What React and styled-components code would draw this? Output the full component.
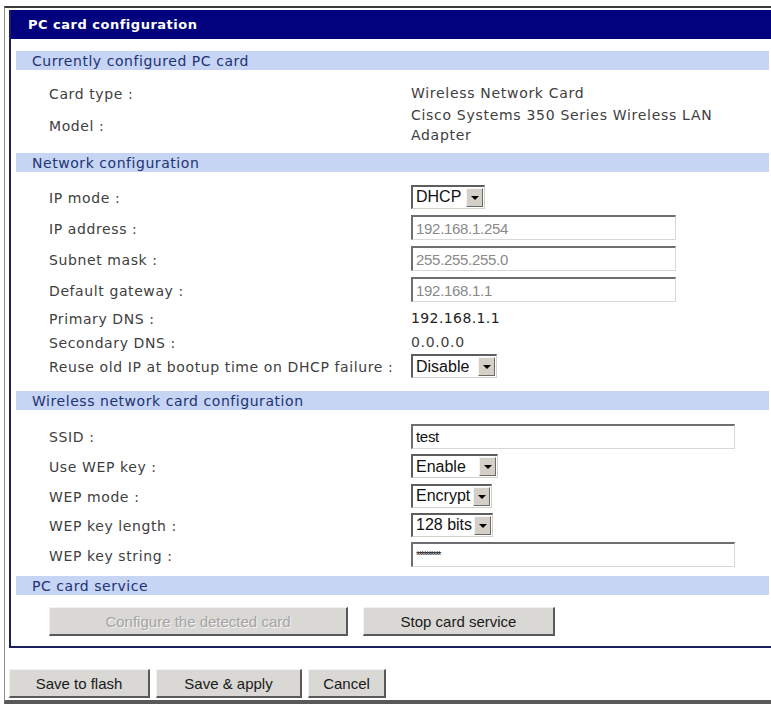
import React from 'react';
import styled, { createGlobalStyle } from 'styled-components';

const GlobalStyle = createGlobalStyle`
  html, body {
    margin: 0;
    padding: 0;
    background: #fff;
    overflow: hidden;
  }
  body {
    font-family: "DejaVu Sans", Verdana, sans-serif;
  }
`;

const Frame = styled.div`
  box-sizing: border-box;
  width: 775px;
  margin: 6px 0 0 4px;
  padding: 2px 4px 2px 4px;
  border-top: 2px solid #3a3a3a;
  border-left: 1px solid #8c8c8c;
  border-bottom: 4px solid #595959;
`;

const Panel = styled.div`
  border: 2px solid #1c1f5e;
  border-top: none;
  padding-bottom: 10px;
`;

const TitleBar = styled.div`
  height: 29px;
  display: flex;
  align-items: center;
  padding-left: 17px;
  background: #02027e;
  color: #fff;
  font-size: 13px;
  font-weight: bold;
  letter-spacing: 0.5px;
`;

const SectionBar = styled.div`
  height: 19px;
  margin: ${({ $top }) => $top}px 4px 0 5px;
  padding-left: 16px;
  display: flex;
  align-items: center;
  background: #c6d5f4;
  color: #223273;
  font-size: 14px;
  letter-spacing: 0.55px;
`;

const Rows = styled.div`
  padding-top: ${({ $top }) => $top}px;
`;

const Row = styled.div`
  display: grid;
  grid-template-columns: 362px 1fr;
  align-items: center;
  height: ${({ $h }) => $h}px;
  padding-left: 38px;
  color: #404040;
  font-size: 14px;
  letter-spacing: 0.6px;
`;

const Label = styled.div`
  padding-top: 2px;
  white-space: nowrap;
`;

const Value = styled.div`
  line-height: 20px;
  color: ${({ $strong }) => ($strong ? '#1e1e1e' : '#404040')};
  letter-spacing: ${({ $strong }) => ($strong ? '0.4px' : '0.7px')};
`;

const TextBox = styled.input`
  box-sizing: border-box;
  width: ${({ $w }) => $w}px;
  height: 25px;
  padding: 0 3px;
  margin: 0;
  background: #fff;
  border-style: solid;
  border-width: 2px 1px 1px 2px;
  border-color: #6e6e6e #d8d8d8 #d8d8d8 #6e6e6e;
  font-family: "Liberation Sans", Arial, sans-serif;
  font-size: ${({ $small }) => ($small ? '10px' : '15px')};
  letter-spacing: ${({ $small }) => ($small ? '-1.5px' : '-0.3px')};
  color: ${({ disabled }) => (disabled ? '#8a8a8a' : '#111')};
  outline: none;
`;

const SelectBox = styled.div`
  box-sizing: border-box;
  width: ${({ $w }) => $w}px;
  height: 24px;
  display: flex;
  align-items: center;
  border-style: solid;
  border-width: 2px 1px 1px 2px;
  border-color: #5e5e5e #d4d0c8 #d4d0c8 #5e5e5e;
  background: #fff;
  font-family: "Liberation Sans", Arial, sans-serif;
  font-size: 16px;
  letter-spacing: 0;
  color: #111;
`;

const SelectText = styled.span`
  flex: 1;
  padding-left: 3px;
  white-space: nowrap;
`;

const SelectButton = styled.span`
  box-sizing: border-box;
  width: 17px;
  height: 19px;
  margin-right: 1px;
  display: flex;
  align-items: center;
  justify-content: center;
  background: #d4d0c8;
  border-style: solid;
  border-width: 1px;
  border-color: #f4f4f4 #6a6a6a #6a6a6a #f4f4f4;

  &::after {
    content: '';
    border-left: 4px solid transparent;
    border-right: 4px solid transparent;
    border-top: 4px solid #000;
    margin-top: 1px;
  }
`;

const Select = ({ value, width }) => (
  <SelectBox $w={width}>
    <SelectText>{value}</SelectText>
    <SelectButton />
  </SelectBox>
);

const ButtonRow = styled.div`
  display: flex;
  gap: ${({ $gap }) => $gap}px;
  padding: ${({ $pad }) => $pad};
`;

const Button = styled.button`
  box-sizing: border-box;
  width: ${({ $w }) => $w}px;
  height: 29px;
  margin: 0;
  padding: 0;
  background: #d9d8d4;
  border-style: solid;
  border-width: 1px 2px 2px 1px;
  border-color: #f2f2f2 #595959 #595959 #f2f2f2;
  font-family: "Liberation Sans", Arial, sans-serif;
  font-size: 15px;
  color: #1a1a1a;
  cursor: default;

  &:disabled {
    color: #a4a4a4;
    text-shadow: 1px 1px 0 #f4f4f4;
  }
`;

export default function App() {
  return (
    <>
      <GlobalStyle />
      <Frame>
        <Panel>
          <TitleBar>PC card configuration</TitleBar>

          <SectionBar $top={12}>Currently configured PC card</SectionBar>
          <Rows $top={11}>
            <Row $h={24}>
              <Label>Card type :</Label>
              <Value>Wireless Network Card</Value>
            </Row>
            <Row $h={40}>
              <Label>Model :</Label>
              <Value>
                Cisco Systems 350 Series Wireless LAN
                <br />
                Adapter
              </Value>
            </Row>
          </Rows>

          <SectionBar $top={8}>Network configuration</SectionBar>
          <Rows $top={9}>
            <Row $h={31}>
              <Label>IP mode :</Label>
              <div>
                <Select value="DHCP" width={74} />
              </div>
            </Row>
            <Row $h={31}>
              <Label>IP address :</Label>
              <div>
                <TextBox $w={265} value="192.168.1.254" disabled readOnly />
              </div>
            </Row>
            <Row $h={31}>
              <Label>Subnet mask :</Label>
              <div>
                <TextBox $w={265} value="255.255.255.0" disabled readOnly />
              </div>
            </Row>
            <Row $h={31}>
              <Label>Default gateway :</Label>
              <div>
                <TextBox $w={265} value="192.168.1.1" disabled readOnly />
              </div>
            </Row>
            <Row $h={26}>
              <Label>Primary DNS :</Label>
              <Value $strong>192.168.1.1</Value>
            </Row>
            <Row $h={22}>
              <Label>Secondary DNS :</Label>
              <Value>0.0.0.0</Value>
            </Row>
            <Row $h={26}>
              <Label>Reuse old IP at bootup time on DHCP failure :</Label>
              <div>
                <Select value="Disable" width={86} />
              </div>
            </Row>
          </Rows>

          <SectionBar $top={12}>Wireless network card configuration</SectionBar>
          <Rows $top={11}>
            <Row $h={30}>
              <Label>SSID :</Label>
              <div>
                <TextBox $w={324} value="test" readOnly />
              </div>
            </Row>
            <Row $h={30}>
              <Label>Use WEP key :</Label>
              <div>
                <Select value="Enable" width={87} />
              </div>
            </Row>
            <Row $h={29}>
              <Label>WEP mode :</Label>
              <div>
                <Select value="Encrypt" width={81} />
              </div>
            </Row>
            <Row $h={29}>
              <Label>WEP key length :</Label>
              <div>
                <Select value="128 bits" width={82} />
              </div>
            </Row>
            <Row $h={31}>
              <Label>WEP key string :</Label>
              <div>
                <TextBox $w={324} value="**********" $small readOnly />
              </div>
            </Row>
          </Rows>

          <SectionBar $top={6}>PC card service</SectionBar>
          <ButtonRow $gap={15} $pad="12px 0 0 38px">
            <Button $w={299} disabled>
              Configure the detected card
            </Button>
            <Button $w={192}>Stop card service</Button>
          </ButtonRow>
        </Panel>

        <ButtonRow $gap={6} $pad="21px 0 0 0">
          <Button $w={141}>Save to flash</Button>
          <Button $w={146}>Save &amp; apply</Button>
          <Button $w={78}>Cancel</Button>
        </ButtonRow>
      </Frame>
    </>
  );
}
